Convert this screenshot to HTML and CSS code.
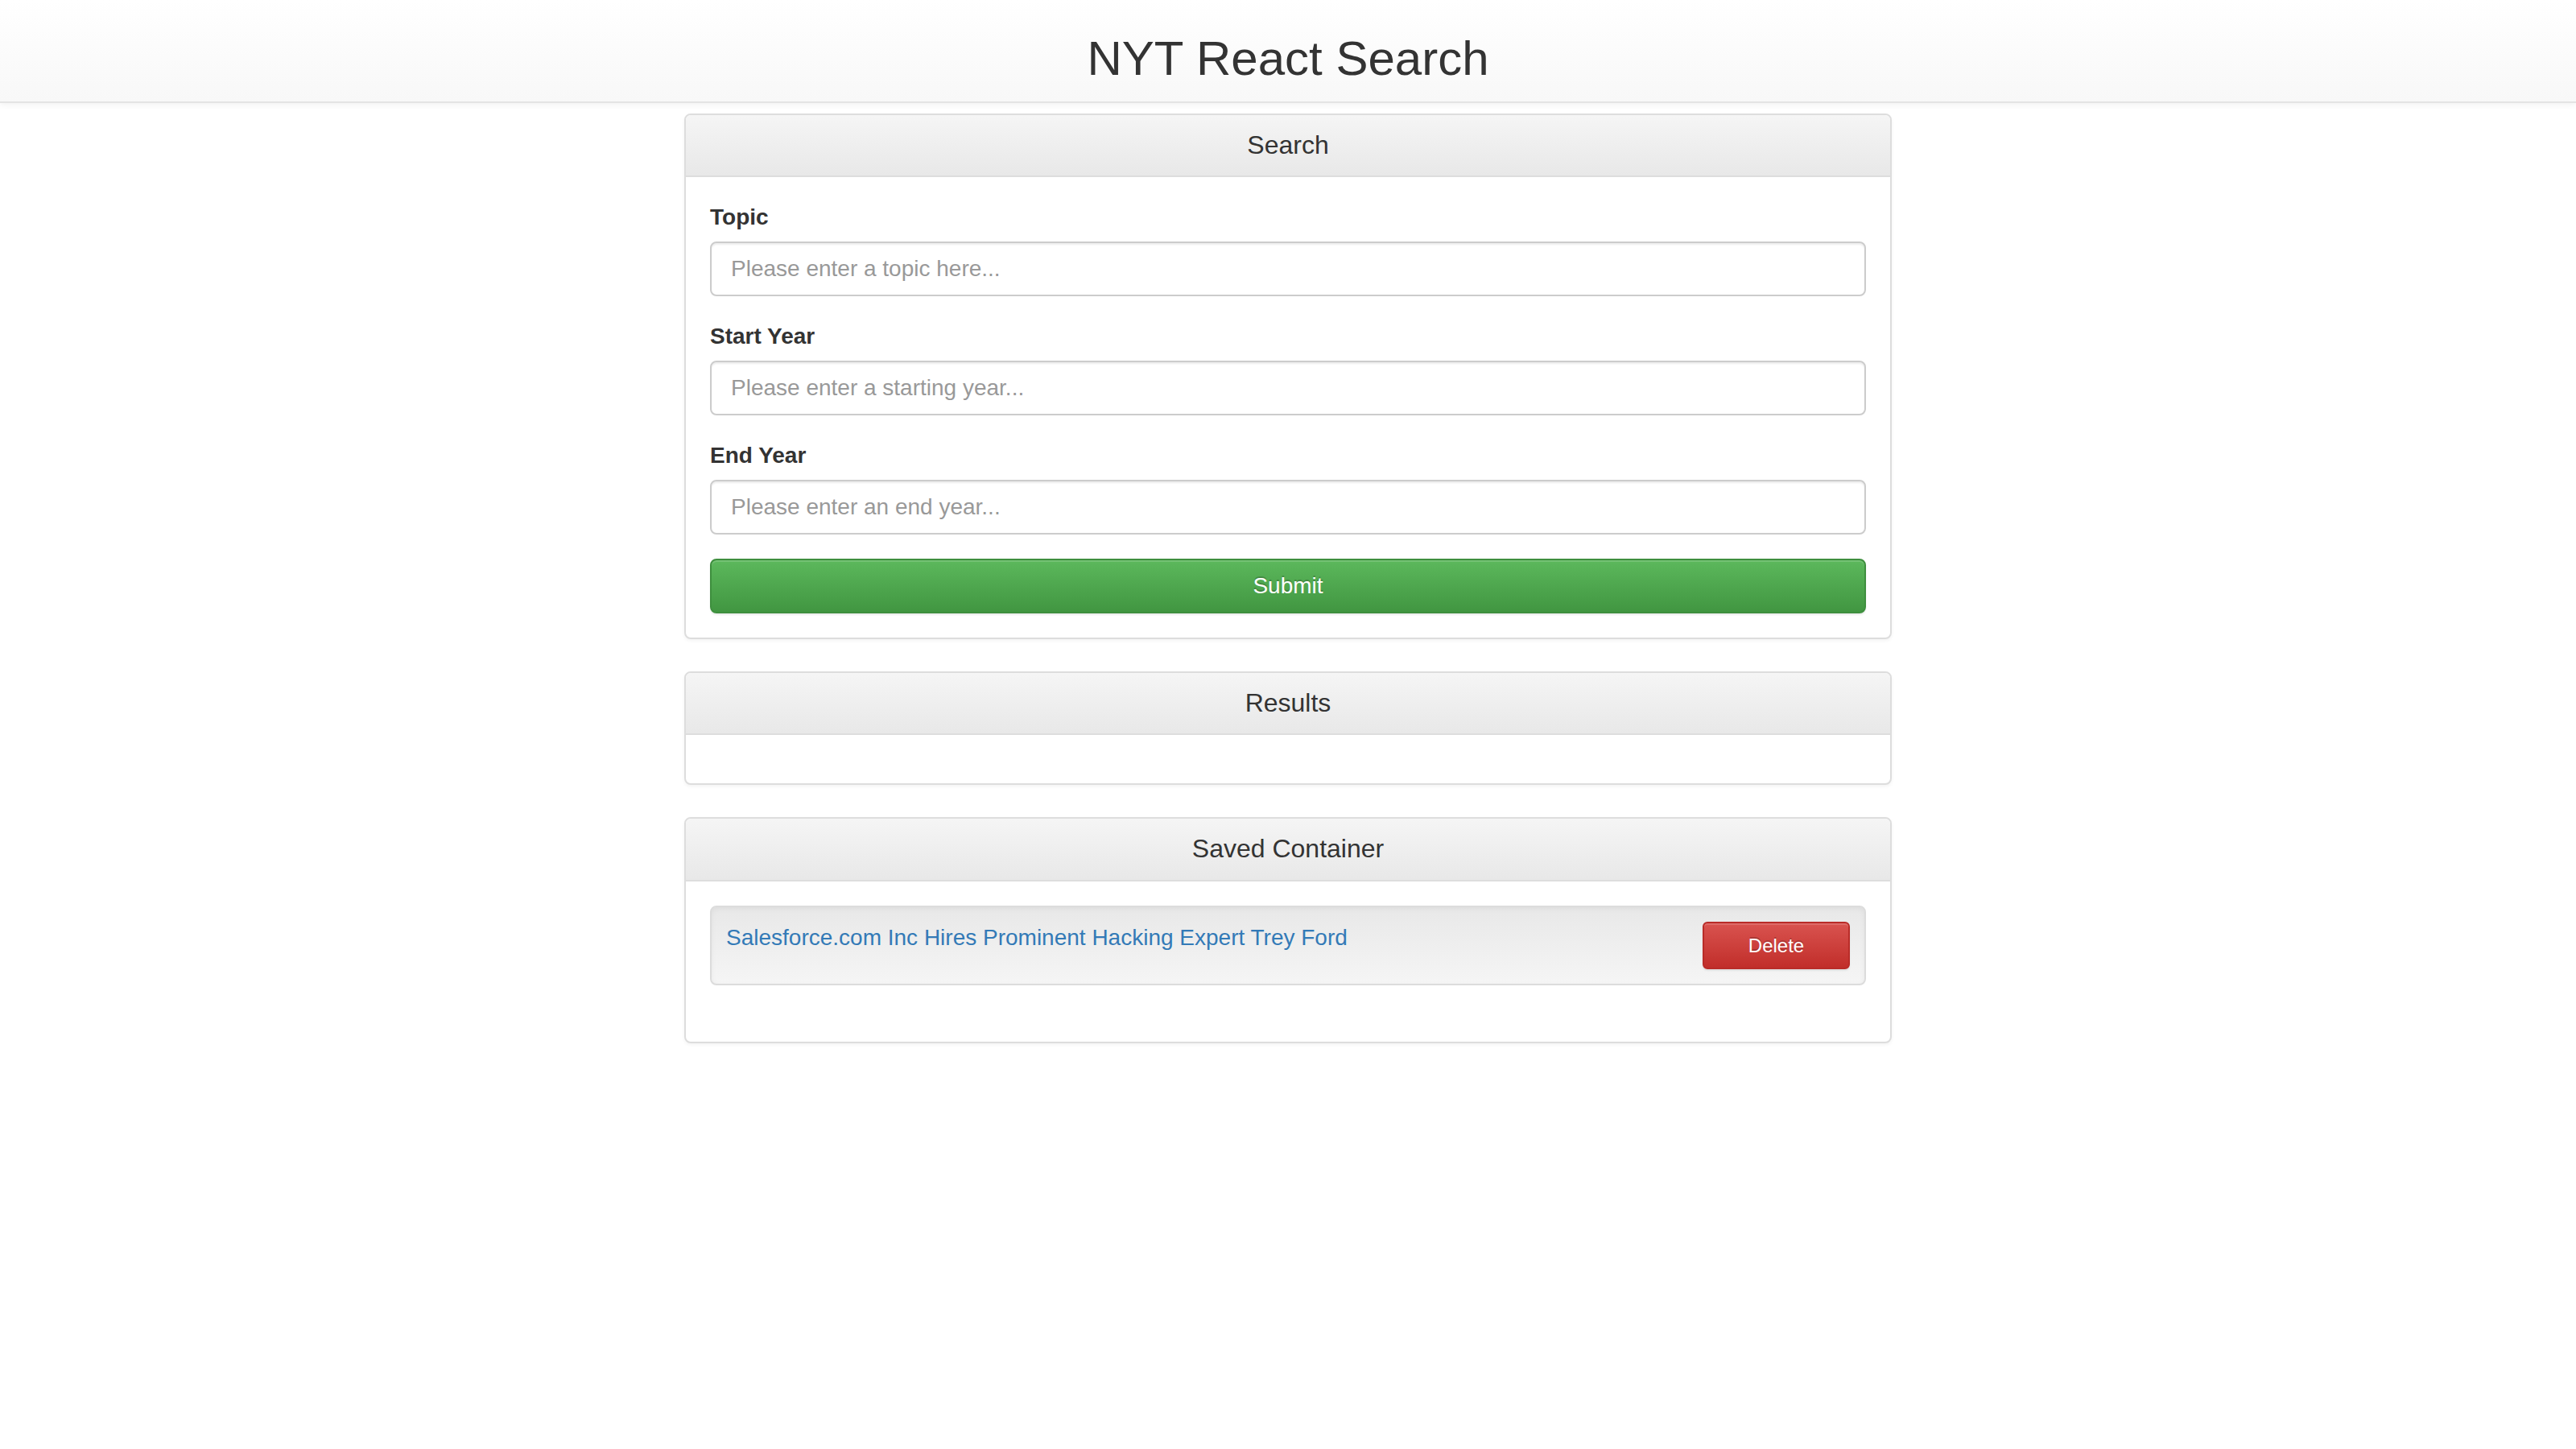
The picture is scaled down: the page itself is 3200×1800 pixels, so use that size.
FILE: index.html
```html
<!DOCTYPE html>
<html lang="en">
<head>
<meta charset="utf-8">
<title>NYT React Search</title>
<link rel="stylesheet" href="styles.css">
</head>
<body>
<header class="site-header">
  <h2 class="site-title">NYT React Search</h2>
</header>
<main class="container">
  <section class="panel">
    <div class="panel-heading"><h3 class="panel-title">Search</h3></div>
    <div class="panel-body">
      <form class="search-form">
        <div class="form-group">
          <label class="form-label" for="topic">Topic</label>
          <input class="form-control" id="topic" type="text" placeholder="Please enter a topic here...">
        </div>
        <div class="form-group">
          <label class="form-label" for="start">Start Year</label>
          <input class="form-control" id="start" type="text" placeholder="Please enter a starting year...">
        </div>
        <div class="form-group">
          <label class="form-label" for="end">End Year</label>
          <input class="form-control" id="end" type="text" placeholder="Please enter an end year...">
        </div>
        <button class="btn btn-success btn-block" type="button">Submit</button>
      </form>
    </div>
  </section>

  <section class="panel">
    <div class="panel-heading"><h3 class="panel-title">Results</h3></div>
    <div class="panel-body"></div>
  </section>

  <section class="panel">
    <div class="panel-heading"><h3 class="panel-title">Saved Container</h3></div>
    <div class="panel-body">
      <div class="well">
        <a class="article-link" href="#">Salesforce.com Inc Hires Prominent Hacking Expert Trey Ford</a>
        <button class="btn btn-danger btn-delete" type="button">Delete</button>
      </div>
    </div>
  </section>
</main>
</body>
</html>
```
FILE: styles.css
```css
* { box-sizing: border-box; }

html, body {
  margin: 0;
  padding: 0;
  background: #fff;
}

body {
  font-family: "Liberation Sans", Arial, sans-serif;
  font-size: 28px;
  line-height: 1.42857;
  color: #333;
}

.site-header {
  height: 128px;
  background: linear-gradient(to bottom, #ffffff 0%, #f8f8f8 100%);
  border-bottom: 2px solid #e4e4e4;
  box-shadow: 0 2px 8px rgba(0, 0, 0, 0.06);
  text-align: center;
  overflow: hidden;
}

.site-title {
  margin: 40px 0 0;
  font-size: 60px;
  font-weight: 400;
  line-height: 1.1;
  color: #333;
}

.container {
  width: 1500px;
  margin: 13px auto 0;
}

.panel {
  background: #fff;
  border: 2px solid #ddd;
  border-radius: 8px;
  box-shadow: 0 2px 4px rgba(0, 0, 0, 0.05);
  margin-bottom: 40px;
  overflow: hidden;
}

.panel-heading {
  padding: 20px 30px;
  background: linear-gradient(to bottom, #f5f5f5 0%, #e8e8e8 100%);
  border-bottom: 2px solid #ddd;
  text-align: center;
}

.panel-title {
  margin: 0;
  font-size: 32px;
  font-weight: 400;
  line-height: 1.1;
  color: #333;
}

.panel-body {
  padding: 30px;
}

.search-form { margin: 0; }

.form-group {
  margin-bottom: 30px;
}

.form-label {
  display: block;
  margin-bottom: 10px;
  font-weight: 700;
  max-width: 100%;
}

.form-control {
  display: block;
  width: 100%;
  height: 68px;
  padding: 12px 24px;
  font-family: inherit;
  font-size: 28px;
  line-height: 1.42857;
  color: #555;
  background: #fff;
  border: 2px solid #ccc;
  border-radius: 8px;
  box-shadow: inset 0 2px 2px rgba(0, 0, 0, 0.075);
  outline: none;
}

.form-control::placeholder {
  color: #999;
  opacity: 1;
}

.btn {
  display: inline-block;
  font-family: inherit;
  font-weight: 400;
  text-align: center;
  white-space: nowrap;
  border: 2px solid transparent;
  cursor: pointer;
  color: #fff;
  text-shadow: 0 -2px 0 rgba(0, 0, 0, 0.2);
  box-shadow: inset 0 2px 0 rgba(255, 255, 255, 0.15), 0 2px 2px rgba(0, 0, 0, 0.075);
}

.btn-block {
  display: block;
  width: 100%;
}

.btn-success {
  height: 68px;
  padding: 12px 24px;
  font-size: 28px;
  line-height: 1.42857;
  border-radius: 8px;
  background: linear-gradient(to bottom, #5cb85c 0%, #419641 100%);
  border-color: #3e8f3e;
}

.btn-danger {
  background: linear-gradient(to bottom, #d9534f 0%, #c12e2a 100%);
  border-color: #b92c28;
}

.btn-delete {
  flex: none;
  width: 183px;
  height: 59px;
  padding: 10px 20px;
  font-size: 24px;
  line-height: 1.5;
  border-radius: 6px;
}

.well {
  display: flex;
  justify-content: space-between;
  align-items: flex-start;
  padding: 18px;
  margin-bottom: 40px;
  min-height: 40px;
  background: linear-gradient(to bottom, #e8e8e8 0%, #f5f5f5 100%);
  border: 2px solid #dcdcdc;
  border-radius: 8px;
  box-shadow: inset 0 2px 6px rgba(0, 0, 0, 0.05), 0 2px 0 rgba(255, 255, 255, 0.1);
}

.article-link {
  color: #337ab7;
  text-decoration: none;
}
```
